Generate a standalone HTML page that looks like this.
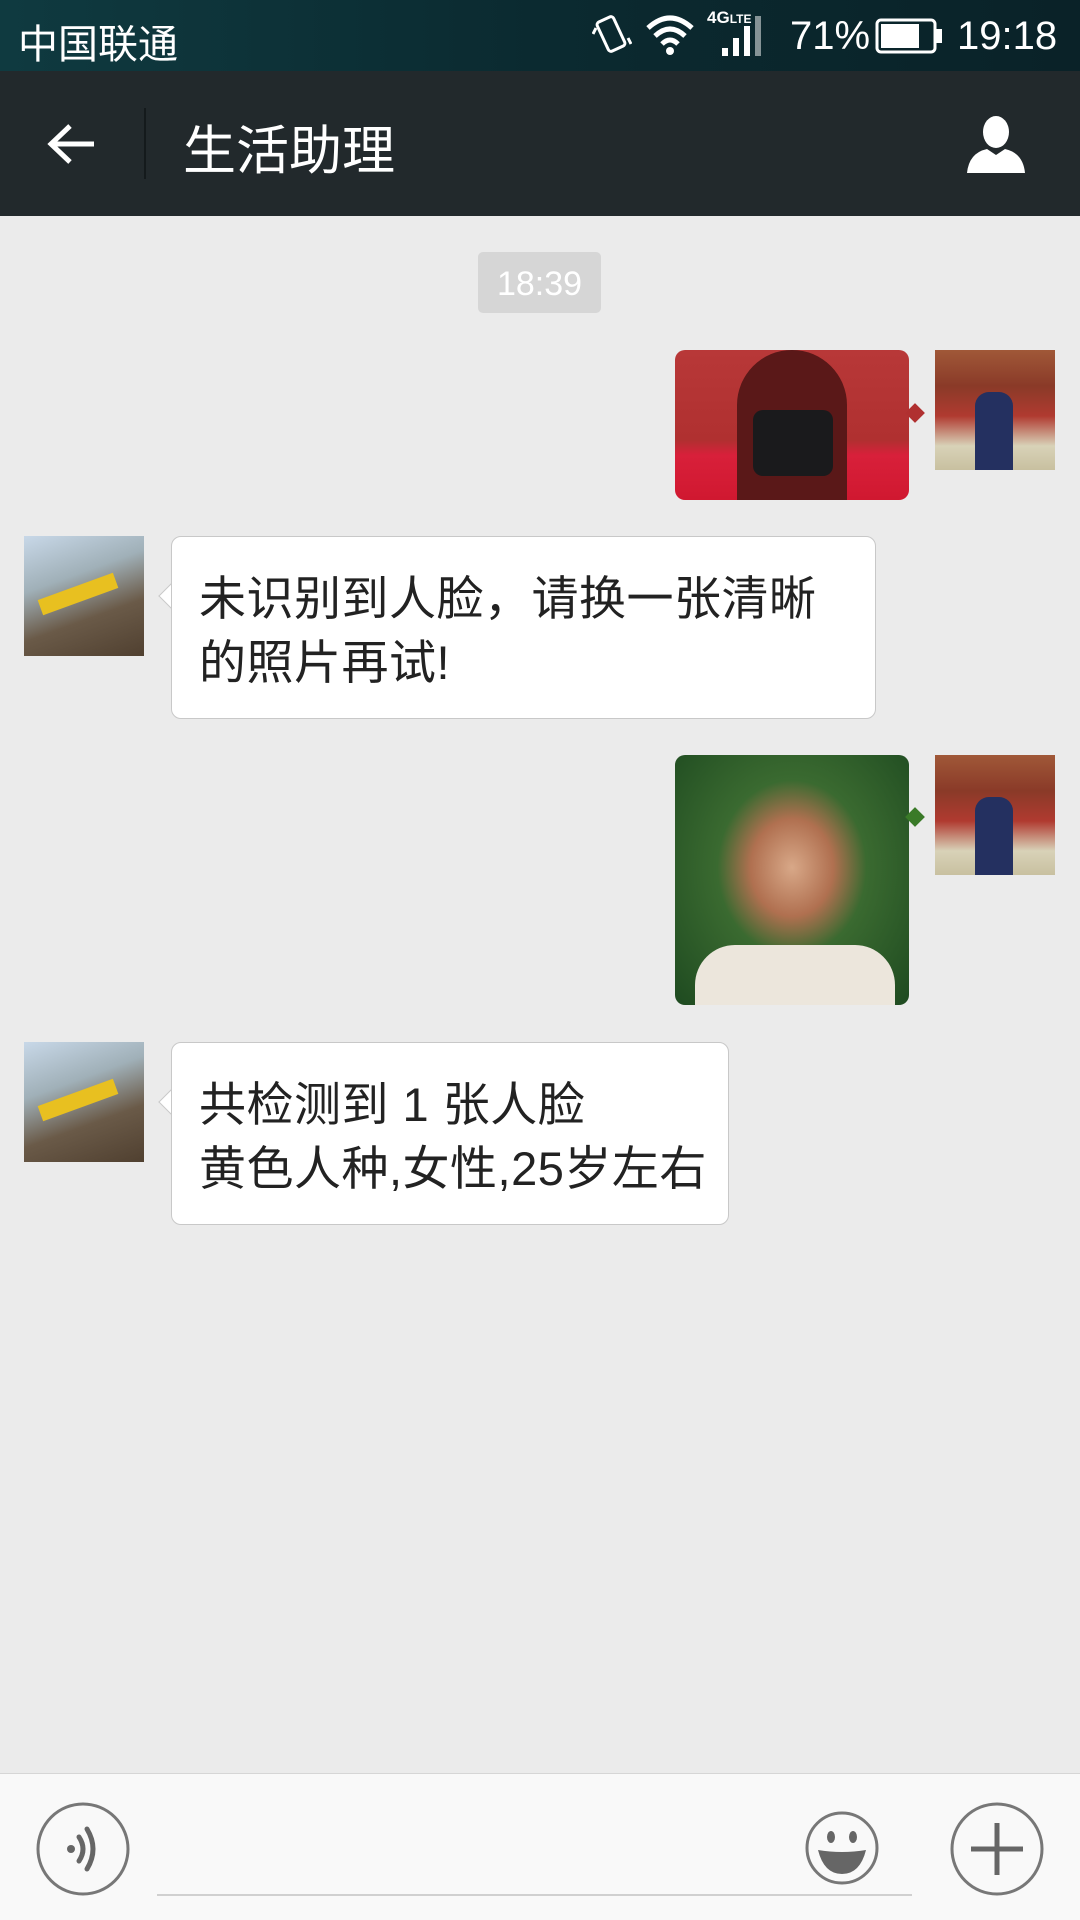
<!DOCTYPE html>
<html><head><meta charset="utf-8">
<style>
*{margin:0;padding:0;box-sizing:border-box}
body{width:1080px;height:1920px;background:#ebebeb;position:relative;overflow:hidden;font-family:"Liberation Sans","Noto Sans CJK SC",sans-serif}
.abs{position:absolute}
.status{left:0;top:0;width:1080px;height:71px;background:linear-gradient(90deg,#0f3a40,#0b2a30 50%,#0a2228);color:#fff}
.title{left:0;top:71px;width:1080px;height:145px;background:#22292c}
.bubble{background:#fff;border:1px solid #c8c8c8;border-radius:10px;color:#222;font-size:47px;line-height:64px;padding:30px 0 0 27px;letter-spacing:0.5px}
.tail{width:18px;height:18px;background:#fff;border-left:1px solid #c8c8c8;border-bottom:1px solid #c8c8c8;transform:rotate(45deg)}
.av{width:120px;height:120px}
</style></head><body>
<div class="abs status">
 <div class="abs" style="left:18px;top:12px;font-size:40px;">中国联通</div>
 <svg class="abs" style="left:592px;top:14px" width="40" height="42" viewBox="0 0 40 42"><rect x="10" y="4" width="18" height="32" rx="3" fill="none" stroke="#fff" stroke-width="3" transform="rotate(-25 19 20)"/><path d="M4 14 l-3 6 M36 24 l3 6" stroke="#fff" stroke-width="3"/></svg>
 <svg class="abs" style="left:645px;top:14px" width="50" height="42" viewBox="0 0 50 42"><path d="M3 14 Q25 -6 47 14" fill="none" stroke="#fff" stroke-width="5"/><path d="M10 22 Q25 8 40 22" fill="none" stroke="#fff" stroke-width="5"/><path d="M17 30 Q25 22 33 30" fill="none" stroke="#fff" stroke-width="5"/><circle cx="25" cy="37" r="4" fill="#fff"/></svg>
 <div class="abs" style="left:707px;top:8px;font-size:17px;font-weight:bold">4G<span style="font-size:12px">LTE</span></div>
 <svg class="abs" style="left:720px;top:14px" width="50" height="44"><rect x="2" y="34" width="6" height="8" fill="#fff"/><rect x="13" y="24" width="6" height="18" fill="#fff"/><rect x="24" y="12" width="6" height="30" fill="#fff"/><rect x="35" y="2" width="6" height="40" fill="#fff" opacity=".5"/></svg>
 <div class="abs" style="left:790px;top:14px;font-size:40px">71%</div>
 <svg class="abs" style="left:875px;top:18px" width="70" height="38"><rect x="2" y="2" width="58" height="32" rx="4" fill="none" stroke="#fff" stroke-width="3"/><rect x="6" y="6" width="38" height="24" fill="#fff"/><rect x="61" y="11" width="6" height="14" fill="#fff"/></svg>
 <div class="abs" style="left:957px;top:14px;font-size:40px">19:18</div>
</div>
<div class="abs title">
 <svg class="abs" style="left:46px;top:50px" width="52" height="46" viewBox="0 0 52 46"><path d="M48 23 H6 M24 5 L5 23 L24 41" fill="none" stroke="#fff" stroke-width="5"/></svg>
 <div class="abs" style="left:144px;top:37px;width:2px;height:71px;background:#141a1c"></div>
 <div class="abs" style="left:183px;top:38px;font-size:53px;color:#fff">生活助理</div>
 <svg class="abs" style="left:965px;top:44px" width="62" height="60" viewBox="0 0 62 60"><ellipse cx="31" cy="17" rx="13" ry="16" fill="#fff"/><path d="M2 58 Q4 38 22 34 L31 40 L40 34 Q58 38 60 58 Z" fill="#fff"/></svg>
</div>
<div class="abs" style="left:478px;top:252px;width:123px;height:61px;background:#d6d6d6;border-radius:5px;color:#fff;font-size:34px;text-align:center;line-height:64px">18:39</div>

<div class="abs" style="left:675px;top:350px;width:234px;height:150px;border-radius:10px;overflow:hidden;background:linear-gradient(180deg,#b83838 0%,#b03030 60%,#d8203a 70%,#d01830 100%)">
 <div class="abs" style="left:62px;top:0;width:110px;height:150px;background:#5a1818;border-radius:55px 55px 0 0"></div>
 <div class="abs" style="left:78px;top:60px;width:80px;height:66px;background:#1a1a1c;border-radius:10px"></div>
</div>
<div class="abs" style="left:908px;top:406px;width:14px;height:14px;background:#b03030;transform:rotate(45deg)"></div>
<div class="abs av" style="left:935px;top:350px;background:linear-gradient(180deg,#a05838 0%,#8a3a28 30%,#b03a30 55%,#d8d2b8 80%,#c8c0a0 100%)"><div class="abs" style="left:40px;top:42px;width:38px;height:78px;background:#243060;border-radius:14px 14px 0 0"></div></div>

<div class="abs av" style="left:24px;top:536px;background:linear-gradient(160deg,#c8d8e8 0%,#a0b0b8 35%,#6a5a48 65%,#504030 100%)"><div class="abs" style="left:14px;top:50px;width:80px;height:16px;background:#e8c020;transform:rotate(-20deg)"></div></div>
<div class="abs tail" style="left:162px;top:587px"></div>
<div class="abs bubble" style="left:171px;top:536px;width:705px;height:183px">未识别到人脸，请换一张清晰<br>的照片再试!</div>
<div class="abs" style="left:172px;top:585px;width:12px;height:24px;background:#fff"></div>

<div class="abs" style="left:675px;top:755px;width:234px;height:250px;border-radius:10px;overflow:hidden;background:radial-gradient(ellipse at 50% 45%,#d8a888 0%,#b07050 25%,#3a6a30 45%,#1e4a20 100%)">
 <div class="abs" style="left:20px;top:190px;width:200px;height:70px;background:#ece6dc;border-radius:40px 40px 0 0"></div>
</div>
<div class="abs" style="left:908px;top:810px;width:14px;height:14px;background:#3a7a28;transform:rotate(45deg)"></div>
<div class="abs av" style="left:935px;top:755px;background:linear-gradient(180deg,#a05838 0%,#8a3a28 30%,#b03a30 55%,#d8d2b8 80%,#c8c0a0 100%)"><div class="abs" style="left:40px;top:42px;width:38px;height:78px;background:#243060;border-radius:14px 14px 0 0"></div></div>

<div class="abs av" style="left:24px;top:1042px;background:linear-gradient(160deg,#c8d8e8 0%,#a0b0b8 35%,#6a5a48 65%,#504030 100%)"><div class="abs" style="left:14px;top:50px;width:80px;height:16px;background:#e8c020;transform:rotate(-20deg)"></div></div>
<div class="abs tail" style="left:162px;top:1093px"></div>
<div class="abs bubble" style="left:171px;top:1042px;width:558px;height:183px">共检测到 1 张人脸<br>黄色人种,女性,25岁左右</div>
<div class="abs" style="left:172px;top:1091px;width:12px;height:24px;background:#fff"></div>

<div class="abs" style="left:0;top:1773px;width:1080px;height:147px;background:#f9f9f9;border-top:1px solid #d6d6d6">
 <svg class="abs" style="left:35px;top:27px" width="96" height="96" viewBox="0 0 96 96"><circle cx="48" cy="48" r="45" fill="none" stroke="#777" stroke-width="3"/><circle cx="36" cy="48" r="4" fill="#666"/><path d="M44 36 Q52 48 44 60 M52 28 Q64 48 52 68" fill="none" stroke="#666" stroke-width="5" stroke-linecap="round"/></svg>
 <div class="abs" style="left:157px;top:120px;width:755px;height:2px;background:#d0d0d0"></div>
 <svg class="abs" style="left:804px;top:36px" width="76" height="76" viewBox="0 0 76 76"><circle cx="38" cy="38" r="35" fill="none" stroke="#777" stroke-width="3"/><ellipse cx="27" cy="27" rx="4" ry="6" fill="#666"/><ellipse cx="49" cy="27" rx="4" ry="6" fill="#666"/><path d="M14 40 Q38 44 62 40 Q56 64 38 64 Q20 64 14 40 Z" fill="#666"/></svg>
 <svg class="abs" style="left:949px;top:27px" width="96" height="96" viewBox="0 0 96 96"><circle cx="48" cy="48" r="45" fill="none" stroke="#777" stroke-width="3"/><path d="M48 22 V74 M22 48 H74" stroke="#666" stroke-width="5"/></svg>
</div>
</body></html>
